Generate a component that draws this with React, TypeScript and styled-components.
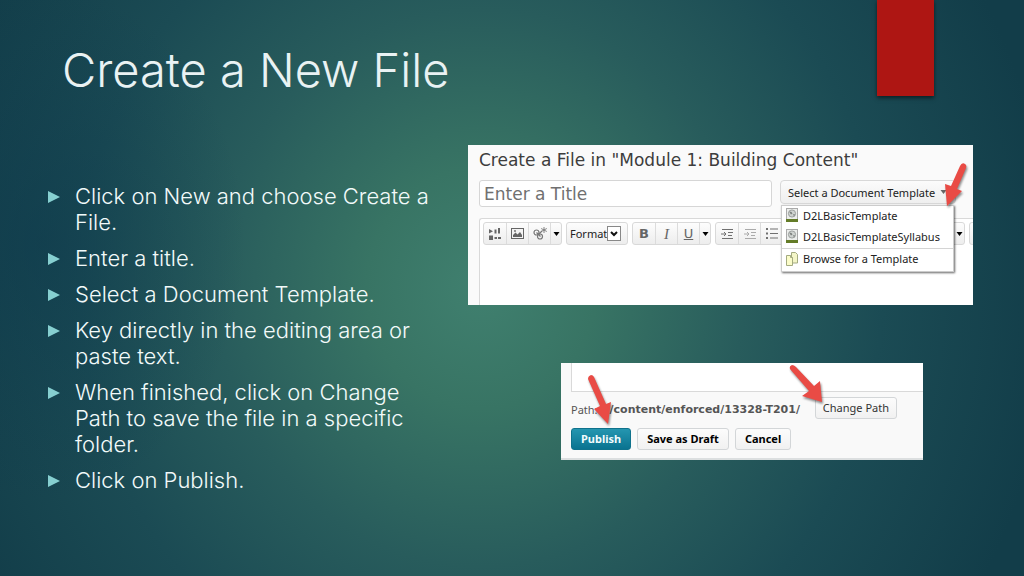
import React from 'react';
import styled, { createGlobalStyle } from 'styled-components';

const GlobalStyle = createGlobalStyle`
  *, *::before, *::after { box-sizing: border-box; }
  html, body { margin: 0; padding: 0; }
  body { background: #14404c; font-family: Inter, "Liberation Sans", sans-serif; }
  button, input, select { font-family: inherit; }
`;

const wideFont = '"DejaVu Sans", "Liberation Sans", sans-serif';
const uiFont = '"Noto Sans", "Open Sans", sans-serif';

const Slide = styled.main`
  min-height: 100vh;
  overflow: hidden;
  color: #f2fafa;
  background:
    radial-gradient(ellipse 20% 45% at 4% 42%, rgba(12, 56, 76, 0.5), transparent),
    radial-gradient(ellipse 56% 105% at 47% 50%, #40806f 0%, #387464 20%, #285c5c 46%, #1b4b54 70%, #123d49 100%);
`;

const Header = styled.header`
  display: flex;
  justify-content: space-between;
  padding: 0 90px 0 62px;
`;

const Title = styled.h1`
  margin: 0;
  padding-top: 40px;
  font-size: 47px;
  line-height: 60px;
  font-weight: 300;
  color: #e9f2f3;
`;

const Ribbon = styled.div`
  width: 57px;
  height: 96px;
  background: #ae1613;
  box-shadow: 0 2px 4px rgba(0, 0, 0, 0.55);
`;

const Content = styled.div`
  display: grid;
  grid-template-columns: minmax(0, 421fr) minmax(0, 505fr);
  align-items: start;
  padding: 45px 51px 40px 47px;
`;

const Steps = styled.ul`
  margin: 0;
  padding: 38px 24px 0 0;
  list-style: none;
  display: flex;
  flex-direction: column;
  gap: 10px;
`;

const Step = styled.li`
  display: flex;
  gap: 14px;
  font-size: 22px;
  line-height: 26px;
  font-weight: 300;
`;

const Bullet = styled.svg`
  flex: none;
  width: 14px;
  height: 14px;
  margin-top: 7px;
  fill: #86cfd0;
`;

const Figures = styled.div`
  display: flex;
  flex-direction: column;
  gap: 58px;
`;

const EditorShot = styled.section`
  position: relative;
  height: 160px;
  padding: 4px 0 0 11px;
  background: #fafafa;
  color: #333;
  font-family: ${uiFont};
  display: flex;
  flex-direction: column;
`;

const ShotTitle = styled.h2`
  margin: 0;
  font-family: ${wideFont};
  font-size: 17px;
  line-height: 22px;
  font-weight: 400;
  color: #3d3d3d;
`;

const TitleRow = styled.div`
  display: flex;
  gap: 8px;
  padding: 9px 17px 0 0;
`;

const TitleInput = styled.input`
  flex: 1;
  min-width: 0;
  height: 27px;
  padding: 0 4px;
  border: 1px solid #d6d6d6;
  border-radius: 3px;
  background: #fff;
  font-family: ${wideFont};
  font-size: 17px;
  color: #555;
  &::placeholder { color: #707070; opacity: 1; }
`;

const TemplatePicker = styled.div`
  position: relative;
  flex: none;
  width: 176px;
`;

const TemplateButton = styled.button`
  display: flex;
  align-items: center;
  gap: 5px;
  width: 100%;
  height: 24px;
  padding: 0 7px;
  border: 1px solid #d8d8d8;
  border-radius: 4px;
  background: linear-gradient(#fbfbfb, #efefef);
  color: #222;
  font-size: 11px;
  white-space: nowrap;
  svg { fill: #666; }
`;

const Caret = styled.svg`
  flex: none;
  width: 7px;
  height: 4px;
  fill: currentColor;
`;

const Menu = styled.div`
  position: absolute;
  top: 25px;
  left: 1px;
  width: 173px;
  height: 67px;
  background: #fff;
  border: 1px solid #ccc;
  box-shadow: 1px 1px 2px 0 rgba(0, 0, 0, 0.6);
  z-index: 1;
`;

const MenuItem = styled.button<{ $ruled?: boolean }>`
  display: flex;
  align-items: center;
  gap: 5px;
  width: 100%;
  height: ${p => (p.$ruled ? 23 : 21)}px;
  padding: 0 4px 3px;
  border: 0;
  border-top: ${p => (p.$ruled ? '1px solid #d4d4d4' : '0')};
  background: none;
  color: #222;
  font-size: 11px;
  white-space: nowrap;
  svg { flex: none; width: 12px; height: 14px; }
`;

const Editor = styled.div`
  flex: 1;
  margin-top: 11px;
  border: 1px solid #d9d9d9;
  border-width: 1px 0 0 1px;
  border-radius: 3px 0 0 0;
  background: #fff;
  overflow: hidden;
`;

const Toolbar = styled.div`
  display: flex;
  gap: 4px;
  padding: 3px 0 0 3px;
`;

const Group = styled.div`
  flex: none;
  display: flex;
  height: 23px;
  border: 1px solid #d9d9d9;
  border-radius: 3px;
  background: linear-gradient(#fdfdfd, #ededed);
  color: #666;
`;

const toolWidths = { narrow: 11, normal: 22, wide: 28 };

const Tool = styled.button<{ $size?: 'narrow' | 'wide' }>`
  display: flex;
  align-items: center;
  justify-content: center;
  width: ${p => toolWidths[p.$size ?? 'normal']}px;
  padding: 0;
  border: 0;
  border-left: 1px solid #dcdcdc;
  background: none;
  color: ${p => (p.$size === 'narrow' ? '#000' : 'inherit')};
  &:first-child { border-left: 0; }
  svg { flex: none; }
`;

const FormatLabel = styled.label`
  display: flex;
  align-items: center;
  width: 60px;
  padding-left: 3px;
  font-size: 11px;
  color: #222;
  white-space: nowrap;
`;

const FormatSelect = styled.select`
  appearance: none;
  width: 14px;
  height: 15px;
  margin: 0;
  padding: 0;
  border: 1px solid #888;
  border-radius: 0;
  background: #fff;
  color: transparent;
`;

const SelectBox = styled.span`
  display: grid;
  align-items: center;
  justify-items: center;
  > * { grid-area: 1 / 1; }
  svg { pointer-events: none; }
`;

const SaveShot = styled.section`
  position: relative;
  width: 362px;
  max-width: 100%;
  margin-left: 93px;
  padding-left: 10px;
  background: #f9f9f9;
  border-bottom: 2px solid #dcdfe0;
  font-family: ${uiFont};
`;

const EditorFoot = styled.div`
  height: 29px;
  border: 1px solid #d9d9d9;
  border-width: 0 0 1px 1px;
  background: #fff;
`;

const PathRow = styled.div`
  display: flex;
  justify-content: space-between;
  align-items: center;
  height: 32px;
  padding-right: 26px;
`;

const PathText = styled.p`
  margin: 0;
  padding-top: 2px;
  display: flex;
  align-items: center;
  gap: 12px;
  font-size: 11px;
  color: #555;
  white-space: nowrap;
  strong { font-family: ${wideFont}; }
`;

const Actions = styled.div`
  display: flex;
  gap: 6px;
  padding: 4px 0 8px;
`;

const Button = styled.button<{ $primary?: boolean; $plain?: boolean }>`
  flex: none;
  height: 22px;
  padding: 0 ${p => (p.$plain ? 7 : 9)}px;
  border: 1px solid ${p => (p.$primary ? '#0f728c' : '#d3d6d8')};
  border-radius: 3px;
  background: ${p => (p.$primary ? 'linear-gradient(#2596b0, #0a7390)' : 'linear-gradient(#fcfcfc, #f1f1f1)')};
  color: ${p => (p.$primary ? '#f2fbfd' : p.$plain ? '#333' : '#000')};
  font-size: 11px;
  line-height: 18px;
  font-weight: ${p => (p.$plain ? 400 : 700)};
  white-space: nowrap;
`;

const Pointer = styled.svg<{ $x: number; $y: number }>`
  position: absolute;
  left: ${p => p.$x}px;
  top: ${p => p.$y}px;
  z-index: 2;
  overflow: visible;
  pointer-events: none;
  fill: #e94b45;
  filter: drop-shadow(1px 2px 1px rgba(0, 0, 0, 0.45));
`;

const steps = [
  'Click on New and choose Create a File.',
  'Enter a title.',
  'Select a Document Template.',
  'Key directly in the editing area or paste text.',
  'When finished, click on Change Path to save the file in a specific folder.',
  'Click on Publish.',
];

const Down = () => (
  <Caret viewBox="0 0 7 4" aria-hidden="true"><path d="M0.5 0h6L3.5 4z" /></Caret>
);

const PageIcon = () => (
  <svg viewBox="0 0 12 14" aria-hidden="true">
    <rect x="0.5" y="0.5" width="11" height="12" fill="#eceeec" stroke="#aaa" />
    <circle cx="6" cy="5.5" r="3.6" fill="#cfd3d0" stroke="#8d918f" strokeWidth="0.8" />
    <path d="M3.5 3.5l2 .5 1 1.5-1.5 1L4 5zM7 6l2 .5-1 2z" fill="#7c807e" />
    <path d="M0 11h12v3H0z" fill="#647c28" />
  </svg>
);

const CopyIcon = () => (
  <svg viewBox="0 0 12 14" aria-hidden="true">
    <path d="M5.5 .5h4l2 2v8.500h-6z" fill="#f4f6c8" stroke="#a4ab80" />
    <path d="M.5 3.500h4l2 2v8h-6z" fill="#fbfcc9" stroke="#a4ab80" />
    <path d="M4.500 3.500v2h2" fill="none" stroke="#a4ab80" />
  </svg>
);

const MediaIcon = () => (
  <svg width="12" height="12" viewBox="0 0 12 12" fill="#666" aria-hidden="true">
    <path d="M0 1l4 2.200L0 5.500zM5.500 1.500h2v4h-2zM9 0h2v5.500H9zM0 7.500h4V12H0zM5.500 9h2.500v2H5.500zM9 9h3v2H9z" />
  </svg>
);

const ImageIcon = () => (
  <svg width="13" height="11" viewBox="0 0 13 11" aria-hidden="true">
    <rect x="0.500" y="0.500" width="12" height="10" fill="#f4f4f4" stroke="#666" />
    <path d="M2 9V7l2.500-2.500L6.500 6.500 9 4l2 3v2z" fill="#666" />
    <circle cx="4" cy="3" r="0.900" fill="#666" />
  </svg>
);

const LinkIcon = () => (
  <svg width="14" height="13" viewBox="0 0 14 13" fill="none" stroke="#777" strokeWidth="1.200" aria-hidden="true">
    <circle cx="3.500" cy="5.500" r="2.500" />
    <circle cx="7" cy="9.500" r="2.500" />
    <path d="M3.500 5.500l4 4M6 7l3-3" />
    <path d="M11 0v6M8.200 1.500l5.600 3M8.200 4.500l5.600-3" strokeWidth="0.900" />
  </svg>
);

const IndentIcon = ({ faint }: { faint?: boolean }) => (
  <svg width="12" height="10" viewBox="0 0 12 10" fill="none" stroke={faint ? '#aaa' : '#707070'} aria-hidden="true">
    <path d="M1 .500h11M7 3.500h5M7 6.500h4M1 9.500h11M0 5h5M3 3l2 2-2 2" />
  </svg>
);

const ListIcon = () => (
  <svg width="12" height="11" viewBox="0 0 12 11" fill="#707070" aria-hidden="true">
    <path d="M0 0h2v2H0zM0 4.500h2v2H0zM0 9h2v2H0zM4 .500h8v1H4zM4 5h8v1H4zM4 9.500h8v1H4z" />
  </svg>
);

const Glyph = styled.span<{ $kind: 'bold' | 'italic' | 'underline' }>`
  font-family: ${p => (p.$kind === 'italic' ? '"Liberation Serif", serif' : wideFont)};
  font-size: ${p => (p.$kind === 'italic' ? 15 : 13)}px;
  line-height: 16px;
  font-weight: ${p => (p.$kind === 'bold' ? 700 : 400)};
  font-style: ${p => (p.$kind === 'italic' ? 'italic' : 'normal')};
  text-decoration: ${p => (p.$kind === 'underline' ? 'underline' : 'none')};
`;

export default function App() {
  return (
    <>
      <GlobalStyle />
      <Slide>
        <Header>
          <Title>Create a New File</Title>
          <Ribbon />
        </Header>
        <Content>
          <Steps>
            {steps.map(text => (
              <Step key={text}>
                <Bullet viewBox="0 0 14 14" aria-hidden="true"><path d="M1 1l12 6-12 6z" /></Bullet>
                <span>{text}</span>
              </Step>
            ))}
          </Steps>
          <Figures>
            <EditorShot>
              <ShotTitle>Create a File in "Module 1: Building Content"</ShotTitle>
              <TitleRow>
                <TitleInput aria-label="Title" placeholder="Enter a Title" />
                <TemplatePicker>
                  <TemplateButton type="button">Select a Document Template <Down /></TemplateButton>
                  <Menu>
                    <MenuItem type="button"><PageIcon />D2LBasicTemplate</MenuItem>
                    <MenuItem type="button"><PageIcon />D2LBasicTemplateSyllabus</MenuItem>
                    <MenuItem type="button" $ruled><CopyIcon />Browse for a Template</MenuItem>
                  </Menu>
                </TemplatePicker>
              </TitleRow>
              <Editor>
                <Toolbar>
                  <Group>
                    <Tool type="button" aria-label="Insert media"><MediaIcon /></Tool>
                    <Tool type="button" aria-label="Insert image"><ImageIcon /></Tool>
                    <Tool type="button" aria-label="Insert link"><LinkIcon /></Tool>
                    <Tool type="button" aria-label="More insert options" $size="narrow"><Down /></Tool>
                  </Group>
                  <Group>
                    <FormatLabel>
                      Format
                      <SelectBox>
                        <FormatSelect><option>Paragraph</option></FormatSelect>
                        <svg width="8" height="6" viewBox="0 0 8 6" fill="none" stroke="#111" strokeWidth="2" aria-hidden="true"><path d="M1 1l3 3 3-3" /></svg>
                      </SelectBox>
                    </FormatLabel>
                  </Group>
                  <Group>
                    <Tool type="button"><Glyph $kind="bold">B</Glyph></Tool>
                    <Tool type="button"><Glyph $kind="italic">I</Glyph></Tool>
                    <Tool type="button"><Glyph $kind="underline">U</Glyph></Tool>
                    <Tool type="button" aria-label="More text styles" $size="narrow"><Down /></Tool>
                  </Group>
                  <Group>
                    <Tool type="button" aria-label="Indent"><IndentIcon /></Tool>
                    <Tool type="button" aria-label="Outdent"><IndentIcon faint /></Tool>
                    <Tool type="button" aria-label="List"><ListIcon /></Tool>
                    <Tool type="button" aria-label="More list options" $size="narrow"><Down /></Tool>
                    <Tool type="button" aria-label="Align left"><ListIcon /></Tool>
                    <Tool type="button" aria-label="Align center"><ListIcon /></Tool>
                    <Tool type="button" aria-label="Align right"><ListIcon /></Tool>
                    <Tool type="button" aria-label="Font"><ListIcon /></Tool>
                    <Tool type="button" aria-label="Size"><ListIcon /></Tool>
                    <Tool type="button" aria-label="Color"><ListIcon /></Tool>
                    <Tool type="button" aria-label="Rule" $size="wide"><ListIcon /></Tool>
                    <Tool type="button" aria-label="More paragraph options" $size="narrow"><Down /></Tool>
                  </Group>
                  <Group><Tool type="button" aria-label="Table" /></Group>
                </Toolbar>
              </Editor>
              <Pointer $x={476} $y={18} width="24" height="44" viewBox="0 0 24 44" aria-hidden="true">
                <path d="M16 3Q18-1 21 1Q23 2 22 5L13 26L18 28L3 43L1 21L7 23Z" />
              </Pointer>
            </EditorShot>
            <SaveShot>
              <EditorFoot />
              <PathRow>
                <PathText><span>Path:</span><strong>/content/enforced/13328-T201/</strong></PathText>
                <Button type="button" $plain>Change Path</Button>
              </PathRow>
              <Actions>
                <Button type="button" $primary>Publish</Button>
                <Button type="button">Save as Draft</Button>
                <Button type="button">Cancel</Button>
              </Actions>
              <Pointer $x={26} $y={12} width="24" height="49" viewBox="0 0 24 49" aria-hidden="true">
                <path d="M1 4Q1 1 4 0Q6 0 7 2L19 29L24 27L21 49L7 34L13 31Z" />
              </Pointer>
              <Pointer $x={228} $y={2} width="34" height="38" viewBox="0 0 34 38" aria-hidden="true">
                <path d="M1 4Q0 1 3 0Q5 0 7 2L25 21L31 16L33 37L13 31L20 26L1 4Z" />
              </Pointer>
            </SaveShot>
          </Figures>
        </Content>
      </Slide>
    </>
  );
}
